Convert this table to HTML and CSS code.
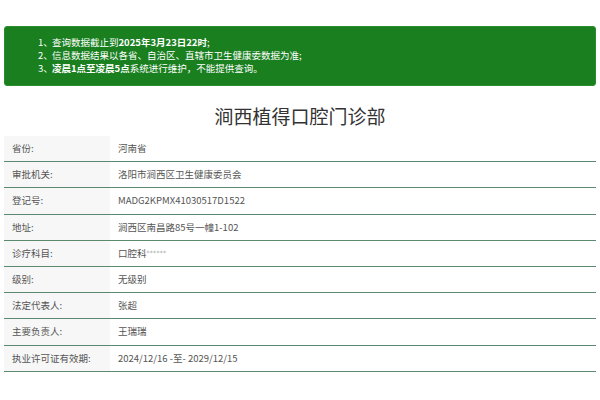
FILE: index.html
```html
<!DOCTYPE html>
<html lang="zh-CN">
<head>
<meta charset="utf-8">
<title>涧西植得口腔门诊部</title>
<link rel="stylesheet" href="styles.css">
</head>
<body>
<div class="page">
  <div class="notice">
    <div class="notice-line"><span class="num">1、</span><span>查询数据截止到<b>2025年3月23日22时</b>;</span></div>
    <div class="notice-line"><span class="num">2、</span><span>信息数据结果以各省、自治区、直辖市卫生健康委数据为准;</span></div>
    <div class="notice-line"><span class="num">3、</span><span><b>凌晨1点至凌晨5点</b>系统进行维护，不能提供查询。</span></div>
  </div>
  <h1 class="title">涧西植得口腔门诊部</h1>
  <table class="info">
    <tr><td class="label">省份:</td><td class="value">河南省</td></tr>
    <tr><td class="label">审批机关:</td><td class="value">洛阳市涧西区卫生健康委员会</td></tr>
    <tr><td class="label">登记号:</td><td class="value">MADG2KPMX41030517D1522</td></tr>
    <tr><td class="label">地址:</td><td class="value">涧西区南昌路85号一幢1-102</td></tr>
    <tr><td class="label">诊疗科目:</td><td class="value">口腔科<span class="stars">******</span></td></tr>
    <tr><td class="label">级别:</td><td class="value">无级别</td></tr>
    <tr><td class="label">法定代表人:</td><td class="value">张超</td></tr>
    <tr><td class="label">主要负责人:</td><td class="value">王瑞瑞</td></tr>
    <tr><td class="label">执业许可证有效期:</td><td class="value">2024/12/16 -至- 2029/12/15</td></tr>
  </table>
</div>
</body>
</html>
```
FILE: styles.css
```css
html, body {
  margin: 0;
  padding: 0;
  background: #fff;
}
body {
  font-family: "Microsoft YaHei", "Noto Sans CJK SC", sans-serif;
  color: #555;
}
.page {
  padding: 26px 4px 0 4px;
}
.notice {
  background: #1a7f1f;
  border: 1px solid #2a8c2e;
  border-radius: 3px;
  padding: 9px 0 10px 33px;
  color: #fff;
  font-size: 9.5px;
  line-height: 13px;
}
.notice-line {
  display: flex;
}
.notice-line .num {
  width: 14px;
  flex: none;
}
.notice b {
  font-weight: bold;
}
.title {
  margin: 15px 0 5px 0;
  font-size: 19px;
  line-height: 30px;
  font-weight: normal;
  text-align: center;
  color: #333;
}
.info {
  width: 100%;
  border-collapse: collapse;
  font-size: 9.5px;
}
.info tr {
  border-bottom: 1px solid #5b8b6e;
}
.info td {
  height: 25.2px;
  padding: 0 0 0 8px;
  vertical-align: middle;
  line-height: 13px;
}
.info .label {
  width: 98px;
  background: #f7f7f7;
  color: #555;
}
.info .value {
  color: #555;
}
.stars {
  color: #999;
  font-family: "DejaVu Sans", sans-serif;
  font-size: 6px;
  vertical-align: 2px;
  letter-spacing: 0.3px;
}
```
